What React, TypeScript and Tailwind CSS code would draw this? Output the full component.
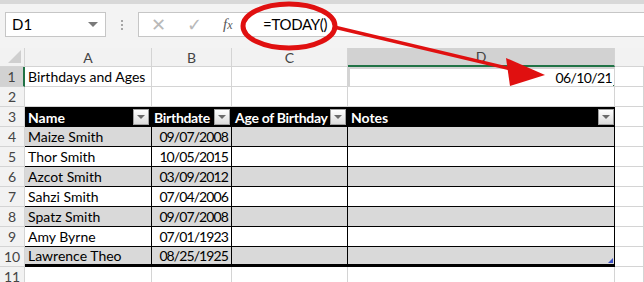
import clsx from "clsx";

const COLS = ["A", "B", "C", "D"];

const PEOPLE = [
  ["Maize Smith", "09/07/2008"],
  ["Thor Smith", "10/05/2015"],
  ["Azcot Smith", "03/09/2012"],
  ["Sahzi Smith", "07/04/2006"],
  ["Spatz Smith", "09/07/2008"],
  ["Amy Byrne", "07/01/1923"],
  ["Lawrence Theo", "08/25/1925"],
];

function FilterButton() {
  return (
    <div className="w-[16px] h-[16px] shrink-0 border border-[#a0a0a0] bg-gradient-to-b from-white to-[#dcdcdc] flex items-center justify-center">
      <div className="w-0 h-0 border-l-[4px] border-r-[4px] border-t-[4px] border-l-transparent border-r-transparent border-t-[#6b6b6b]" />
    </div>
  );
}

function RowHeader({ n, active }: { n: number; active?: boolean }) {
  return (
    <div
      className={clsx(
        "flex items-center justify-center border-b border-r border-[#d4d4d4] text-[#444]",
        active ? "bg-[#d2d2d2] border-r-2 border-r-[#217346]" : "bg-[#f2f2f2]"
      )}
    >
      {n}
    </div>
  );
}

function Cell({ className, children }: { className?: string; children?: React.ReactNode }) {
  return (
    <div className={clsx("flex items-center px-[3px] border-b border-r border-[#d4d4d4] overflow-hidden whitespace-nowrap", className)}>
      {children}
    </div>
  );
}

function Callout() {
  return (
    <svg className="absolute left-0 top-0 pointer-events-none" width="644" height="282">
      <ellipse cx="289" cy="26" rx="46" ry="22" fill="none" stroke="#e01010" strokeWidth="5" />
      <line x1="334" y1="27" x2="515" y2="70" stroke="#e01010" strokeWidth="3.5" />
      <polygon points="545,75 506,58 510,86" fill="#e01010" />
    </svg>
  );
}

export default function App() {
  return (
    <div
      className="relative w-[644px] h-[282px] overflow-hidden bg-white text-[14px] text-black"
      style={{ fontFamily: "Lato, 'Liberation Sans', sans-serif" }}
    >
      {/* formula bar */}
      <div className="h-[48px] bg-[#f3f3f3] border-t-[4px] border-[#d8d8d8] flex items-start pt-[8px] gap-[10px] pl-[5px]">
        <div className="w-[101px] h-[25px] bg-white border border-[#c6c6c6] flex items-center justify-between px-[6px] text-[15px]">
          <span>D1</span>
          <div className="w-0 h-0 border-l-[5px] border-r-[5px] border-t-[5px] border-l-transparent border-r-transparent border-t-[#7a7a7a] mr-[1px]" />
        </div>
        <div className="w-[12px] h-[25px] flex flex-col items-center justify-center gap-[2px]">
          <div className="w-[2px] h-[2px] bg-[#a6a6a6]" />
          <div className="w-[2px] h-[2px] bg-[#a6a6a6]" />
          <div className="w-[2px] h-[2px] bg-[#a6a6a6]" />
        </div>
        <div className="flex-1 h-[25px] bg-white border border-[#c6c6c6] border-r-0 flex items-center">
          <div className="w-[104px] flex items-center justify-around text-[#b9b9b9] text-[18px] pl-[2px]">
            <span>✕</span>
            <span>✓</span>
            <span className="text-[#595959] italic text-[15px]" style={{ fontFamily: "'Liberation Serif', serif" }}>
              f<span className="text-[12px]">x</span>
            </span>
          </div>
          <div className="pl-[20px] text-[15px] tracking-[-0.3px]">=TODAY()</div>
        </div>
      </div>

      {/* sheet */}
      <div className="grid grid-cols-[25px_127px_80px_116px_267px_1fr] grid-rows-[19px_repeat(11,20px)]">
        <div className="bg-[#f2f2f2] border-b border-r border-[#d4d4d4] flex items-end justify-end p-[3px]">
          <svg width="13" height="13">
            <polygon points="13,0 13,13 0,13" fill="#cfcfcf" />
          </svg>
        </div>
        {COLS.map((c) => (
          <div
            key={c}
            className={clsx(
              "flex items-center justify-center border-b border-r border-[#d4d4d4] text-[#444]",
              c === "D" ? "bg-[#d2d2d2] border-b-2 border-b-[#217346]" : "bg-[#f2f2f2]"
            )}
          >
            {c}
          </div>
        ))}
        <div className="bg-[#f2f2f2] border-b border-[#d4d4d4]" />

        {/* row 1 */}
        <RowHeader n={1} active />
        <Cell>Birthdays and Ages</Cell>
        <Cell />
        <Cell />
        <Cell className="relative justify-end border-2 border-[#217346] pr-[2px] tracking-[-0.6px]">
          06/10/21
          <div className="absolute right-[-4px] bottom-[-4px] w-[6px] h-[6px] bg-[#217346] border border-white" />
        </Cell>
        <Cell />

        {/* row 2 */}
        <RowHeader n={2} />
        <Cell />
        <Cell />
        <Cell />
        <Cell />
        <Cell />

        {/* row 3 table header */}
        <RowHeader n={3} />
        <div className="bg-black text-white font-bold flex items-center justify-between pl-[3px] pr-[2px] border-r border-black">
          <span>Name</span>
          <FilterButton />
        </div>
        <div className="bg-black text-white font-bold flex items-center justify-between pl-[2px] pr-[1px] border-r border-black">
          <span className="tracking-[-0.3px]">Birthdate</span>
          <FilterButton />
        </div>
        <div className="bg-black text-white font-bold flex items-center justify-between pl-[3px] pr-[1px] border-r border-black whitespace-nowrap">
          <span className="tracking-[-0.3px]">Age of Birthday</span>
          <FilterButton />
        </div>
        <div className="bg-black text-white font-bold flex items-center justify-between pl-[3px] pr-[1px]">
          <span>Notes</span>
          <FilterButton />
        </div>
        <Cell />

        {PEOPLE.map(([name, date], i) => {
          const shade = i % 2 === 0 ? "bg-[#d9d9d9]" : "bg-white";
          const last = i === PEOPLE.length - 1;
          const bottom = last ? "border-b-[3px] border-b-black" : "border-b border-b-black";
          return [
            <RowHeader key={`h${i}`} n={i + 4} />,
            <div key={`a${i}`} className={clsx("flex items-center pl-[3px] border-r border-black", shade, bottom)}>
              {name}
            </div>,
            <div key={`b${i}`} className={clsx("flex items-center justify-end pr-[3px] border-r border-black tracking-[-0.9px]", shade, bottom)}>
              {date}
            </div>,
            <div key={`c${i}`} className={clsx("border-r border-black", shade, bottom)} />,
            <div key={`d${i}`} className={clsx("relative border-r border-black", shade, bottom)}>
              {last && <div className="absolute right-[1px] bottom-[1px] w-0 h-0 border-l-[5px] border-b-[5px] border-l-transparent border-b-[#3b4fc4]" />}
            </div>,
            <Cell key={`e${i}`} />,
          ];
        })}

        <RowHeader n={11} />
        <Cell />
        <Cell />
        <Cell />
        <Cell />
        <Cell />
      </div>

      <Callout />
    </div>
  );
}
